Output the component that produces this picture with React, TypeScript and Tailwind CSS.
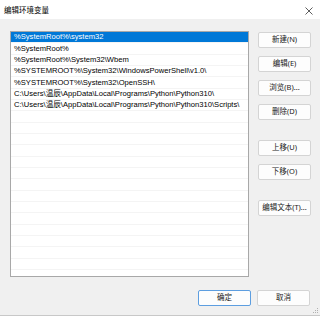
const PATHS = [
  "%SystemRoot%\\system32",
  "%SystemRoot%",
  "%SystemRoot%\\System32\\Wbem",
  "%SYSTEMROOT%\\System32\\WindowsPowerShell\\v1.0\\",
  "%SYSTEMROOT%\\System32\\OpenSSH\\",
  "C:\\Users\\温辰\\AppData\\Local\\Programs\\Python\\Python310\\",
  "C:\\Users\\温辰\\AppData\\Local\\Programs\\Python\\Python310\\Scripts\\",
];

const FONT = "font-['Segoe_UI','Noto_Sans','Noto_Sans_CJK_SC',sans-serif]";

function Btn({ label, className = "", primary = false }: { label: string; className?: string; primary?: boolean }) {
  return (
    <button
      className={`h-[16px] w-[53px] rounded-[2px] bg-[#fdfdfd] text-[7.5px] leading-none text-[#1a1a1a] border ${
        primary ? "border-[#5d9ee0]" : "border-[#d4d4d4]"
      } ${className}`}
    >
      {label}
    </button>
  );
}

export default function App() {
  const rows = Array.from({ length: 22 }, (_, i) => PATHS[i] ?? "");

  return (
    <div className={`relative w-[320px] h-[316px] bg-[#f0f0f0] flex flex-col border-b border-[#c8c8c8] ${FONT}`}>
      {/* Title bar */}
      <div className="h-[19px] bg-white flex items-center justify-between pl-[4px] pr-[7px]">
        <span className="text-[7.5px] text-black mt-[3px]">编辑环境变量</span>
        <svg width="8" height="8" viewBox="0 0 8 8" className="mt-[3px]">
          <path d="M0.5 0.5L7.5 7.5M7.5 0.5L0.5 7.5" stroke="#333" strokeWidth="0.8" />
        </svg>
      </div>

      {/* Body */}
      <div className="flex pl-[10px] pt-[12px]">
        <div className="w-[239px] h-[246px] bg-white border border-[#a8a8a8] overflow-hidden">
          {rows.map((p, i) => (
            <div
              key={i}
              className={`h-[11.33px] flex items-center pl-[3px] text-[7.6px] leading-none whitespace-nowrap border-b border-[#f4f4f4] font-['Liberation_Sans','Noto_Sans_CJK_SC',sans-serif] ${
                i === 0 ? "bg-[#0078d7] text-white" : "text-black"
              }`}
            >
              {p}
            </div>
          ))}
        </div>

        <div className="flex flex-col ml-[9px]">
          <Btn label="新建(N)" className="mt-[1px]" />
          <Btn label="编辑(E)" className="mt-[8px]" />
          <Btn label="浏览(B)..." className="mt-[8px]" />
          <Btn label="删除(D)" className="mt-[8px]" />
          <Btn label="上移(U)" className="mt-[20px]" />
          <Btn label="下移(O)" className="mt-[8px]" />
          <Btn label="编辑文本(T)..." className="mt-[20px]" />
        </div>
      </div>

      {/* Footer */}
      <div className="flex justify-end gap-[6px] pr-[10px] mt-[13px]">
        <Btn label="确定" primary className="w-[52px]" />
        <Btn label="取消" className="w-[52px]" />
      </div>

      {/* Resize grip */}
      <svg width="6" height="6" viewBox="0 0 6 6" className="absolute right-[1px] bottom-[1px]">
        <rect x="4" y="0" width="1" height="1" fill="#b0b0b0" />
        <rect x="2" y="2" width="1" height="1" fill="#b0b0b0" />
        <rect x="4" y="2" width="1" height="1" fill="#b0b0b0" />
        <rect x="0" y="4" width="1" height="1" fill="#b0b0b0" />
        <rect x="2" y="4" width="1" height="1" fill="#b0b0b0" />
        <rect x="4" y="4" width="1" height="1" fill="#b0b0b0" />
      </svg>
    </div>
  );
}
